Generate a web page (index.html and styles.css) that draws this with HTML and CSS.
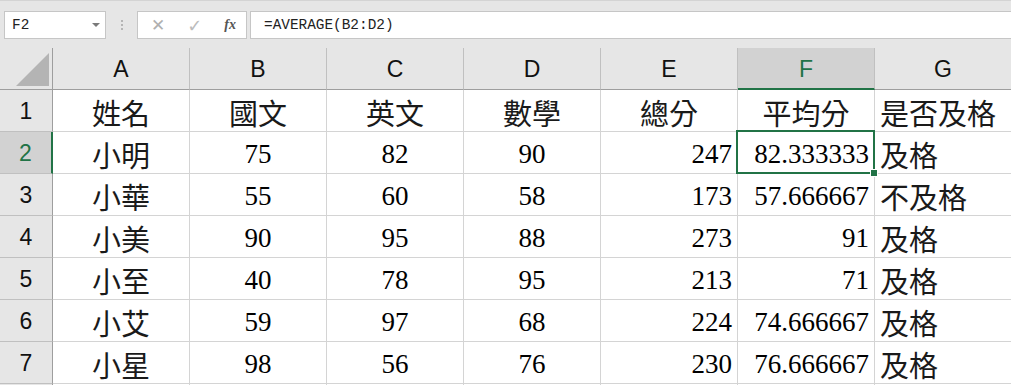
FILE: index.html
```html
<html>
<head>
<title>Sheet</title>
<meta charset="utf-8">
<link rel="stylesheet" href="styles.css">
</head>
<body>
  <div class=bar>
    <div class=namebox>
      <span>F2</span>
      <span class=arrow></span>
    </div>
    <div class=dots><i></i><i></i><i></i></div>
    <div class=btns>
      <span class="btn x">✕</span>
      <span class="btn ok">✓</span>
      <span class="btn fx">fx</span>
    </div>
    <div class=formula>=AVERAGE(B2:D2)</div>
  </div>

  <div class=sheet>
    <div class="hd corner"><span class=tri></span></div>
    <div class="hd col">A</div>
    <div class="hd col">B</div>
    <div class="hd col">C</div>
    <div class="hd col">D</div>
    <div class="hd col">E</div>
    <div class="hd col sel">F</div>
    <div class="hd col">G</div>

    <div class="hd row">1</div>
    <div class="c ctr cjk">姓名</div>
    <div class="c ctr cjk">國文</div>
    <div class="c ctr cjk">英文</div>
    <div class="c ctr cjk">數學</div>
    <div class="c ctr cjk">總分</div>
    <div class="c ctr cjk">平均分</div>
    <div class="c lft cjk">是否及格</div>

    <div class="hd row sel">2</div>
    <div class="c ctr cjk">小明</div>
    <div class="c ctr">75</div>
    <div class="c ctr">82</div>
    <div class="c ctr">90</div>
    <div class="c rgt">247</div>
    <div class="c rgt active">82.333333<span class=handle></span></div>
    <div class="c lft cjk">及格</div>

    <div class="hd row">3</div>
    <div class="c ctr cjk">小華</div>
    <div class="c ctr">55</div>
    <div class="c ctr">60</div>
    <div class="c ctr">58</div>
    <div class="c rgt">173</div>
    <div class="c rgt">57.666667</div>
    <div class="c lft cjk">不及格</div>

    <div class="hd row">4</div>
    <div class="c ctr cjk">小美</div>
    <div class="c ctr">90</div>
    <div class="c ctr">95</div>
    <div class="c ctr">88</div>
    <div class="c rgt">273</div>
    <div class="c rgt">91</div>
    <div class="c lft cjk">及格</div>

    <div class="hd row">5</div>
    <div class="c ctr cjk">小至</div>
    <div class="c ctr">40</div>
    <div class="c ctr">78</div>
    <div class="c ctr">95</div>
    <div class="c rgt">213</div>
    <div class="c rgt">71</div>
    <div class="c lft cjk">及格</div>

    <div class="hd row">6</div>
    <div class="c ctr cjk">小艾</div>
    <div class="c ctr">59</div>
    <div class="c ctr">97</div>
    <div class="c ctr">68</div>
    <div class="c rgt">224</div>
    <div class="c rgt">74.666667</div>
    <div class="c lft cjk">及格</div>

    <div class="hd row">7</div>
    <div class="c ctr cjk">小星</div>
    <div class="c ctr">98</div>
    <div class="c ctr">56</div>
    <div class="c ctr">76</div>
    <div class="c rgt">230</div>
    <div class="c rgt">76.666667</div>
    <div class="c lft cjk">及格</div>

    <div class="hd row"></div>
    <div class=c></div>
    <div class=c></div>
    <div class=c></div>
    <div class=c></div>
    <div class=c></div>
    <div class=c></div>
    <div class=c></div>
  </div>
</body>
</html>
```

FILE: styles.css
```css
body, html {
  margin : 0;
  background : #e6e6e6;
  overflow : hidden
}

/* formula bar */
.bar {
  height : 48px;
  box-sizing : border-box;
  border-top : 1px solid #d4d4d4;
  padding-top : 10px;
  display : flex;
  align-items : flex-start;
  font-family : "Liberation Mono", monospace;
  font-size : 14.4px;
  color : #222
}
.namebox, .btns, .formula {
  height : 28px;
  box-sizing : border-box;
  background : #fff;
  border : 1px solid #c6c6c6;
  display : flex;
  align-items : center
}
.namebox {
  margin-left : 4px;
  width : 102px;
  padding : 0 0 0 7px;
  justify-content : space-between
}
.arrow {
  width : 0;
  height : 0;
  border-left : 4px solid transparent;
  border-right : 4px solid transparent;
  border-top : 4px solid #7a7a7a;
  margin-right : 5px
}
.dots {
  width : 31px;
  height : 28px;
  display : flex;
  flex-direction : column;
  align-items : center;
  justify-content : center;
  gap : 2px
}
.dots i {
  width : 2px;
  height : 2px;
  background : #b5b5b5
}
.btns {
  width : 110px;
  justify-content : space-between;
  padding : 0 10px 0 13px
}
.btn {
  font-family : "DejaVu Sans", sans-serif;
  color : #b0b0b0;
  font-size : 18px
}
.btn.x { font-size : 17px }
.btn.ok { color : #bcbcbc }
.btn.fx {
  font-family : "Liberation Serif", serif;
  font-style : italic;
  font-weight : bold;
  color : #555;
  font-size : 14px
}
.formula {
  margin-left : 3px;
  flex : 1;
  border-right : none;
  padding-left : 13px
}

/* grid */
.sheet {
  display : grid;
  grid-template-columns : 53px repeat(7, 137px);
  grid-auto-rows : 42px;
  width : 1012px
}
.hd {
  box-sizing : border-box;
  background : #e6e6e6;
  font-family : "Liberation Sans", sans-serif;
  font-size : 23px;
  color : #111;
  display : flex;
  align-items : center;
  justify-content : center
}
.corner {
  border-right : 1px solid #9e9e9e;
  border-bottom : 1px solid #9e9e9e;
  position : relative
}
.tri {
  position : absolute;
  left : 16px;
  top : 5px;
  width : 0;
  height : 0;
  border-left : 33px solid transparent;
  border-bottom : 33px solid #b4b4b4
}
.col {
  border-right : 1px solid #c0c0c0;
  border-bottom : 1px solid #9e9e9e;
  padding-top : 2px
}
.row {
  border-right : 1px solid #9e9e9e;
  border-bottom : 1px solid #c0c0c0;
  padding-top : 2px
}
.col.sel {
  background : #d2d2d2;
  color : #217346;
  border-bottom : 2px solid #217346
}
.row.sel {
  background : #d2d2d2;
  color : #217346;
  border-right : 2px solid #217346
}

.c {
  box-sizing : border-box;
  background : #fff;
  border-right : 1px solid #d4d4d4;
  border-bottom : 1px solid #d4d4d4;
  font-family : "Liberation Serif", "Noto Sans CJK TC", serif;
  font-size : 27px;
  color : #000;
  display : flex;
  align-items : center;
  padding-top : 4px;
  white-space : nowrap
}
.cjk {
  font-family : "Noto Sans CJK TC", serif;
  font-size : 29px;
  color : #1a1a1a;
  padding-top : 2px
}
.ctr { justify-content : center }
.rgt { justify-content : flex-end; padding-right : 5px }
.lft { justify-content : flex-start; padding-left : 5px }

.active { position : relative }
.active:after {
  content : "";
  position : absolute;
  left : -2px;
  top : -2px;
  right : -1px;
  bottom : -1px;
  border : 2px solid #217346;
  pointer-events : none
}
.handle {
  position : absolute;
  right : -4px;
  bottom : -4px;
  width : 6px;
  height : 6px;
  background : #217346;
  border : 1px solid #fff;
  z-index : 2
}
```
